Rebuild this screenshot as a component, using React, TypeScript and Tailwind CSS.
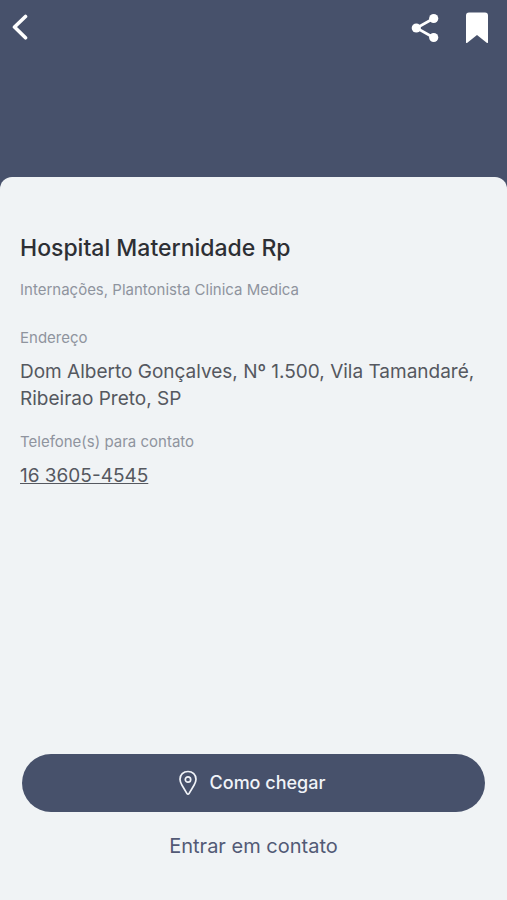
import React from "react";

function BackIcon() {
  return (
    <svg width="20" height="30" viewBox="0 0 20 30" fill="none" stroke="currentColor" strokeWidth="3.600" strokeLinecap="round" strokeLinejoin="round" aria-hidden="true">
      <path d="M13.500 4.500 2.500 15l11 10.800" />
    </svg>
  );
}

function ShareIcon() {
  return (
    <svg width="28" height="30" viewBox="0 0 28 30" fill="currentColor" aria-hidden="true">
      <path d="M22.500 5.500 5.500 15l17 9.500" fill="none" stroke="currentColor" strokeWidth="2.600" />
      <circle cx="22.700" cy="5.500" r="4.600" />
      <circle cx="5.300" cy="15" r="4.600" />
      <circle cx="22.700" cy="24.500" r="4.600" />
    </svg>
  );
}

function BookmarkIcon() {
  return (
    <svg width="24" height="32" viewBox="0 0 24 32" fill="currentColor" aria-hidden="true">
      <path d="M4 .5h16a3 3 0 0 1 3 3v27a.6.6 0 0 1-1 .4L12 23 2 30.900a.6.6 0 0 1-1-.4v-27a3 3 0 0 1 3-3Z" />
    </svg>
  );
}

function PinIcon() {
  return (
    <svg width="20" height="26" viewBox="0 0 20 26" fill="none" stroke="currentColor" strokeWidth="1.700" strokeLinejoin="round" aria-hidden="true">
      <path d="M10 1.500c4.600 0 8 3.300 8 7.700 0 2.200-.9 4.100-2 6L11 23.600a1.200 1.200 0 0 1-2 0L4 15.200c-1.100-1.900-2-3.800-2-6 0-4.400 3.400-7.700 8-7.700Z" />
      <circle cx="10" cy="9.500" r="2.700" />
    </svg>
  );
}

export default function App() {
  return (
    <div className="flex min-h-screen flex-col bg-[#47516b] font-['Inter','Liberation_Sans',sans-serif]">
      <header className="flex h-[177px] items-start justify-between px-3 pt-3 text-white">
        <button type="button" aria-label="Voltar">
          <BackIcon />
        </button>
        <div className="flex items-center gap-[26px] pr-1.5">
          <button type="button" aria-label="Compartilhar">
            <ShareIcon />
          </button>
          <button type="button" aria-label="Salvar">
            <BookmarkIcon />
          </button>
        </div>
      </header>

      <main className="flex grow flex-col rounded-t-xl bg-[#f0f3f5]">
        <section className="grow px-5 pt-[55px]">
          <h1 className="text-[23px] leading-8 font-medium text-[#2d2f34]">Hospital Maternidade Rp</h1>
          <p className="mt-4 text-[15px] leading-5 text-[#8f949e]">Internações, Plantonista Clinica Medica</p>
          <dl>
            <dt className="mt-7 text-[15px] leading-5 text-[#8f949e]">Endereço</dt>
            <dd className="mt-2.5 text-[19px] leading-[27px] text-[#55585f]">
              Dom Alberto Gonçalves, Nº 1.500, Vila Tamandaré, Ribeirao Preto, SP
            </dd>
            <dt className="mt-5 text-[15px] leading-5 text-[#8f949e]">Telefone(s) para contato</dt>
            <dd className="mt-2.5 text-[19px] leading-[27px] text-[#55585f]">
              <a href="tel:+551636054545" className="underline">16 3605-4545</a>
            </dd>
          </dl>
        </section>

        <footer className="flex flex-col px-[22px] pb-10 text-xl">
          <button type="button" className="flex h-[58px] items-center justify-center gap-3 rounded-full bg-[#47516b] pr-1 text-lg font-medium text-[#f0f3f8]">
            <PinIcon />
            Como chegar
          </button>
          <button type="button" className="mt-5 leading-7 text-[#525a75]">Entrar em contato</button>
        </footer>
      </main>
    </div>
  );
}
